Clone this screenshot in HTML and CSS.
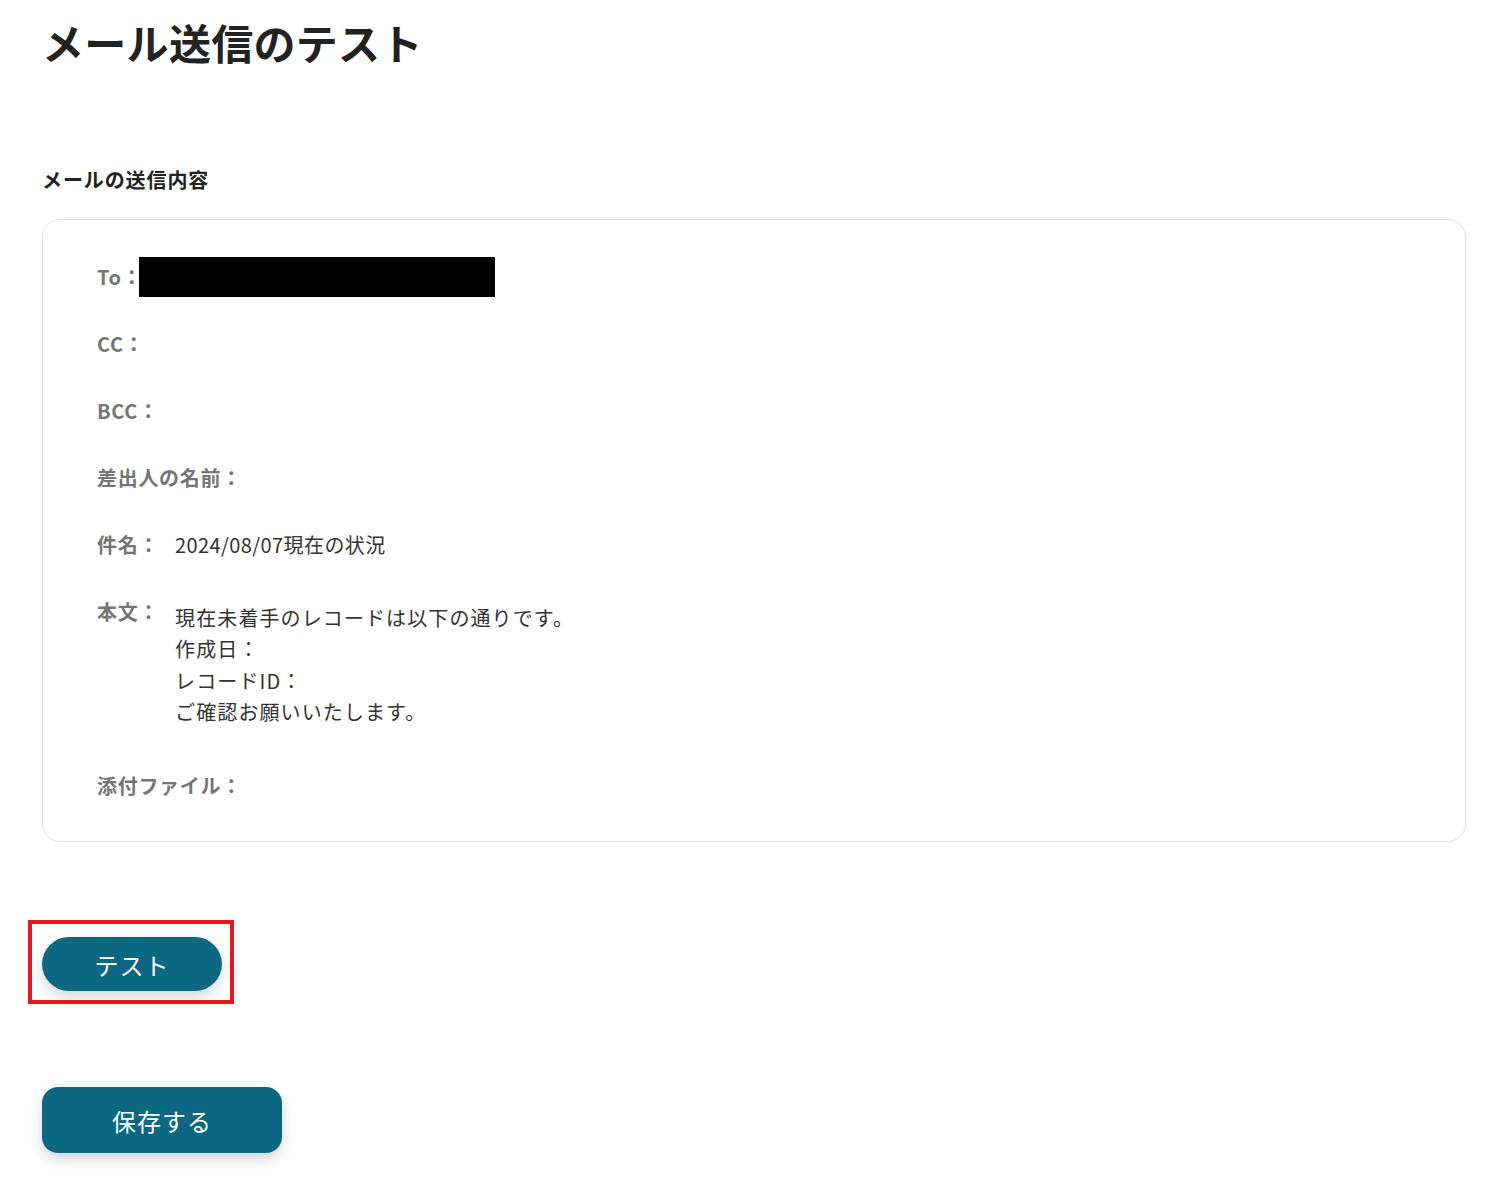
FILE: index.html
```html
<!DOCTYPE html>
<html lang="ja">
<head>
<meta charset="utf-8">
<title>メール送信のテスト</title>
<link rel="stylesheet" href="styles.css">
</head>
<body>
<main class="page">
  <h1 class="title">メール送信のテスト</h1>
  <h2 class="section-title">メールの送信内容</h2>
  <section class="card">
    <div class="row">
      <span class="label">To：</span>
      <span class="redacted"></span>
    </div>
    <div class="row">
      <span class="label">CC：</span>
    </div>
    <div class="row">
      <span class="label">BCC：</span>
    </div>
    <div class="row">
      <span class="label">差出人の名前：</span>
    </div>
    <div class="row">
      <span class="label">件名：</span>
      <span class="value">2024/08/07現在の状況</span>
    </div>
    <div class="row row-top">
      <span class="label">本文：</span>
      <div class="value body-text">
        <div>現在未着手のレコードは以下の通りです。</div>
        <div>作成日：</div>
        <div>レコードID：</div>
        <div>ご確認お願いいたします。</div>
      </div>
    </div>
    <div class="row">
      <span class="label">添付ファイル：</span>
    </div>
  </section>
  <div class="test-area">
    <div class="highlight">
      <button class="btn btn-test" type="button">テスト</button>
      <span class="highlight-frame"></span>
    </div>
  </div>
  <div class="save-area">
    <button class="btn btn-save" type="button">保存する</button>
  </div>
</main>
</body>
</html>
```
FILE: styles.css
```css
* { box-sizing: border-box; }
html, body { margin: 0; padding: 0; background: #ffffff; }
body {
  font-family: "Noto Sans CJK JP", "Noto Sans", sans-serif;
  color: #333333;
}
.page {
  padding: 10px 41px 40px 42px;
}
.title {
  margin: 0;
  font-size: 42px;
  line-height: 63px;
  font-weight: 700;
  color: #222222;
  letter-spacing: 0.3px;
}
.section-title {
  margin: 92px 0 0;
  font-size: 20px;
  line-height: 30px;
  font-weight: 700;
  color: #222222;
  letter-spacing: 0.9px;
}
.card {
  margin-top: 24px;
  border: 1px solid #e2e2e2;
  border-radius: 18px;
  padding: 37px 54px 35px;
  display: flex;
  flex-direction: column;
  gap: 27px;
}
.row {
  display: flex;
  align-items: center;
  min-height: 40px;
}
.row-top { align-items: flex-start; }
.label {
  font-size: 20px;
  font-weight: 700;
  color: #757575;
  line-height: 40px;
  white-space: nowrap;
  letter-spacing: 0.7px;
}
.redacted {
  display: block;
  width: 356px;
  height: 40px;
  background: #000000;
  margin-left: -3px;
}
.value {
  font-size: 20px;
  line-height: 40px;
  color: #333333;
  padding-left: 16px;
  letter-spacing: 0.4px;
}
.body-text {
  line-height: 31.3px;
  padding-top: 10px;
  padding-bottom: 12px;
  letter-spacing: 1.1px;
}
.test-area {
  margin-top: 95px;
}
.highlight {
  position: relative;
  display: inline-block;
}
.highlight-frame {
  position: absolute;
  left: -14px;
  top: -17px;
  right: -12px;
  bottom: -13px;
  border: 4px solid #e8141f;
  pointer-events: none;
}
.btn {
  display: block;
  border: none;
  background: #0b6880;
  color: #ffffff;
  font-family: "Noto Sans CJK JP", "Noto Sans", sans-serif;
  font-size: 24px;
  cursor: pointer;
  box-shadow: 0 6px 14px rgba(0, 30, 50, 0.18);
}
.btn-test {
  width: 180px;
  height: 54px;
  border-radius: 27px;
  letter-spacing: 1px;
}
.save-area {
  margin-top: 96px;
}
.btn-save {
  width: 240px;
  height: 66px;
  border-radius: 16px;
  letter-spacing: 1px;
}
```
